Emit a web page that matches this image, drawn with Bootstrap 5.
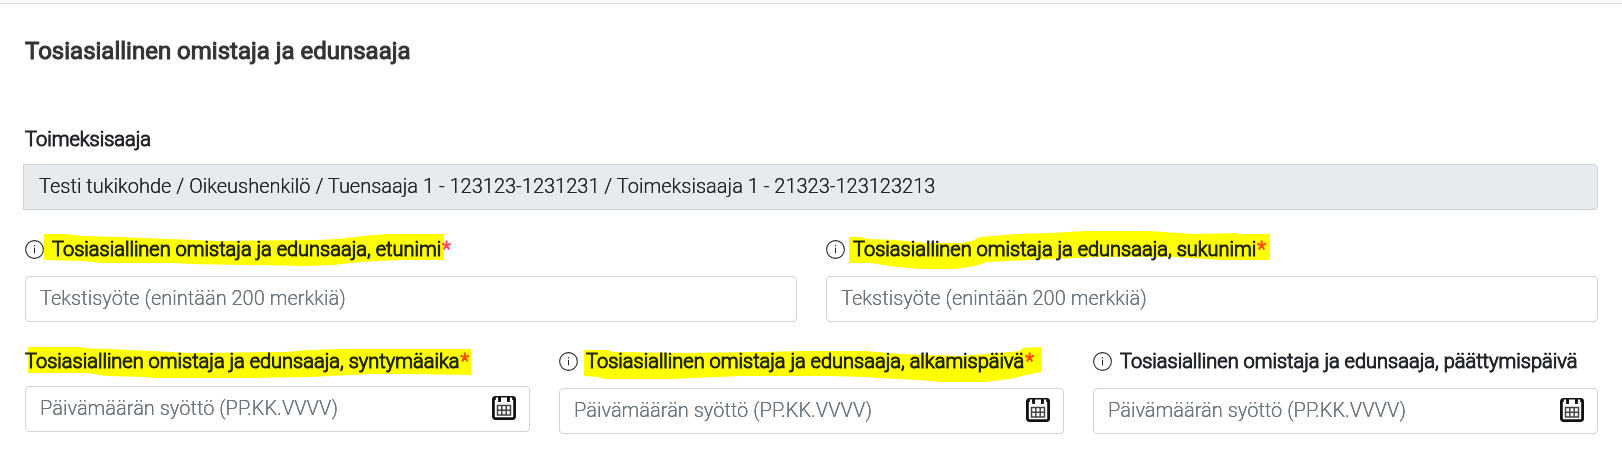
<!DOCTYPE html>
<html lang="fi">
<head>
<meta charset="utf-8">
<meta name="viewport" content="width=device-width, initial-scale=1">
<title>Tosiasiallinen omistaja ja edunsaaja</title>
<link href="https://cdn.jsdelivr.net/npm/bootstrap@5.3.0/dist/css/bootstrap.min.css" rel="stylesheet">
<style>
  body { font-family: Roboto, "Liberation Sans", sans-serif; font-size: 20px; font-weight: 300; color: #212529; background: #fff; text-shadow: 0 0 0 currentcolor; }
  .top-rule { height: 4px; background: #fafafa; border-bottom: 1px solid #dcdcdc; }
  .owner-form { padding: 32px 24px 32px 25px; }
  .owner-title { font-size: 24px; line-height: 30px; color: #333; margin-bottom: 61px; -webkit-text-stroke: 1px; text-shadow: none; }
  .form-grid { --bs-gutter-x: 29px; --bs-gutter-y: 27px; }
  .field-label { display: flex; align-items: center; position: relative; width: fit-content; line-height: 24px; margin-bottom: 13px; white-space: nowrap; -webkit-text-stroke: 1px; }
  .field-label.with-info { margin-bottom: 15px; }
  .info-icon { width: 19px; height: 19px; margin-right: 8px; flex: none; }
  .required-mark { color: #ff4d5e; margin-left: 1px; }
  .marker { position: absolute; left: 0; top: -8px; height: 44px; overflow: visible; mix-blend-mode: multiply; pointer-events: none; fill: #ff0; }
  .form-control { height: 46px; padding: 7px 14px 9px; font-size: 20px; font-weight: 300; line-height: 28px; color: #212529; border-color: #ced4da; border-radius: 4px; text-shadow: inherit; }
  .form-control::placeholder { color: #6c757d; text-shadow: 0 0 0 #6c757d; }
  .form-control.recipient { background: #e7ebee; padding-left: 15px; border-radius: 0 4px 4px 0; margin-left: -2px; width: calc(100% + 2px); }
  .date-field { position: relative; }
  .date-field .form-control { padding-right: 56px; }
  .date-button { position: absolute; right: 14px; top: 10px; width: 24px; height: 24px; padding: 0; border: 0; background: none; display: flex; }
</style>
</head>
<body>
<svg class="d-none" aria-hidden="true">
  <symbol id="info" viewBox="0 0 18 18">
    <circle cx="9" cy="9" r="8.4" fill="none" stroke="#212529" stroke-width="1"/>
    <path d="M9 7.4v5.2" stroke="#212529" stroke-width="1"/>
    <circle cx="9" cy="5.4" r=".7" fill="#212529"/>
  </symbol>
  <symbol id="calendar" viewBox="0 0 24 24">
    <rect x="1.4" y="1.4" width="21.2" height="21.2" rx="2" fill="#fff" stroke="#111" stroke-width="2.8"/>
    <path d="M2 1h20v3H2z" fill="#111"/>
    <path d="M3.8 1.6h2.4v3H3.8zM9 1.6h6v3H9zM17.8 1.6h2.4v3h-2.4z" fill="#fff"/>
    <path d="M6.2 2h2.8v4H6.2zM15 2h2.8v4H15z" fill="#111"/>
    <path d="M5.5 9.5h13v9.5h-13zM9.8 9.5V19M14.2 9.5V19M5.5 14.2h13" fill="none" stroke="#444" stroke-width="1.5"/>
  </symbol>
</svg>
<div class="top-rule"></div>
<main class="container-fluid owner-form">
  <h1 class="owner-title fw-normal">Tosiasiallinen omistaja ja edunsaaja</h1>
  <form class="row form-grid">
    <div class="col-12">
      <label class="field-label" for="recipient">Toimeksisaaja</label>
      <input class="form-control recipient" id="recipient" type="text" readonly value="Testi tukikohde / Oikeushenkilö / Tuensaaja 1 - 123123-1231231 / Toimeksisaaja 1 - 21323-123123213">
    </div>
    <div class="col-6">
      <label class="field-label with-info" for="first-name">
        <svg class="info-icon"><use href="#info"/></svg>Tosiasiallinen omistaja ja edunsaaja, etunimi<span class="required-mark">*</span>
        <svg class="marker" width="430" viewBox="25 229 430 44"><path d="M44 234H66L83 236 119 237 195 240 216 241 317 240 338 239 372 235 388 234H444V260H400L360 262 333 265 304 266 192 264 172 263H103L83 261 44 260z"/></svg>
      </label>
      <input class="form-control" id="first-name" type="text" placeholder="Tekstisyöte (enintään 200 merkkiä)">
    </div>
    <div class="col-6">
      <label class="field-label with-info" for="last-name">
        <svg class="info-icon"><use href="#info"/></svg>Tosiasiallinen omistaja ja edunsaaja, sukunimi<span class="required-mark">*</span>
        <svg class="marker" width="450" viewBox="826 229 450 44"><path d="M849 237H860L868 239 895 240 925 243 960 243 972 241 980 237 1017 234 1050 233 1087 231H1148L1193 234 1237 233 1238 234H1270V260H1222L1173 257H1100L1053 259 1030 260 987 262 975 266 955 269H920L897 267 870 263H849z"/></svg>
      </label>
      <input class="form-control" id="last-name" type="text" placeholder="Tekstisyöte (enintään 200 merkkiä)">
    </div>
    <div class="col-4">
      <label class="field-label" for="birth-date">Tosiasiallinen omistaja ja edunsaaja, syntymäaika<span class="required-mark">*</span>
        <svg class="marker" width="450" viewBox="25 341 450 44"><path d="M28 347H83V348L108 349 152 351 190 353 285 352 310 350 343 349H471V375L405 374H370L350 375 310 377 254 378H153L145 377 105 376 88 373H28z"/></svg>
      </label>
      <div class="date-field">
        <input class="form-control" id="birth-date" type="text" placeholder="Päivämäärän syöttö (PP.KK.VVVV)">
        <button class="date-button" type="button" aria-label="Valitse syntymäaika"><svg width="24" height="24"><use href="#calendar"/></svg></button>
      </div>
    </div>
    <div class="col-4">
      <label class="field-label with-info" for="start-date">
        <svg class="info-icon"><use href="#info"/></svg>Tosiasiallinen omistaja ja edunsaaja, alkamispäivä<span class="required-mark">*</span>
        <svg class="marker" width="490" viewBox="559 341 490 44"><path d="M584 350H608L612 352 680 353 763 352 800 351H865L900 354 960 356 985 354 1020 351 1022 348 1041 347V372L1030 374 1010 379 985 382H940L918 380 880 378 865 377 830 376H740L670 379H605L598 377 584 376z"/></svg>
      </label>
      <div class="date-field">
        <input class="form-control" id="start-date" type="text" placeholder="Päivämäärän syöttö (PP.KK.VVVV)">
        <button class="date-button" type="button" aria-label="Valitse alkamispäivä"><svg width="24" height="24"><use href="#calendar"/></svg></button>
      </div>
    </div>
    <div class="col-4">
      <label class="field-label with-info" for="end-date">
        <svg class="info-icon"><use href="#info"/></svg>Tosiasiallinen omistaja ja edunsaaja, päättymispäivä
      </label>
      <div class="date-field">
        <input class="form-control" id="end-date" type="text" placeholder="Päivämäärän syöttö (PP.KK.VVVV)">
        <button class="date-button" type="button" aria-label="Valitse päättymispäivä"><svg width="24" height="24"><use href="#calendar"/></svg></button>
      </div>
    </div>
  </form>
</main>
<script src="https://cdn.jsdelivr.net/npm/bootstrap@5.3.0/dist/js/bootstrap.bundle.min.js"></script>
</body>
</html>
